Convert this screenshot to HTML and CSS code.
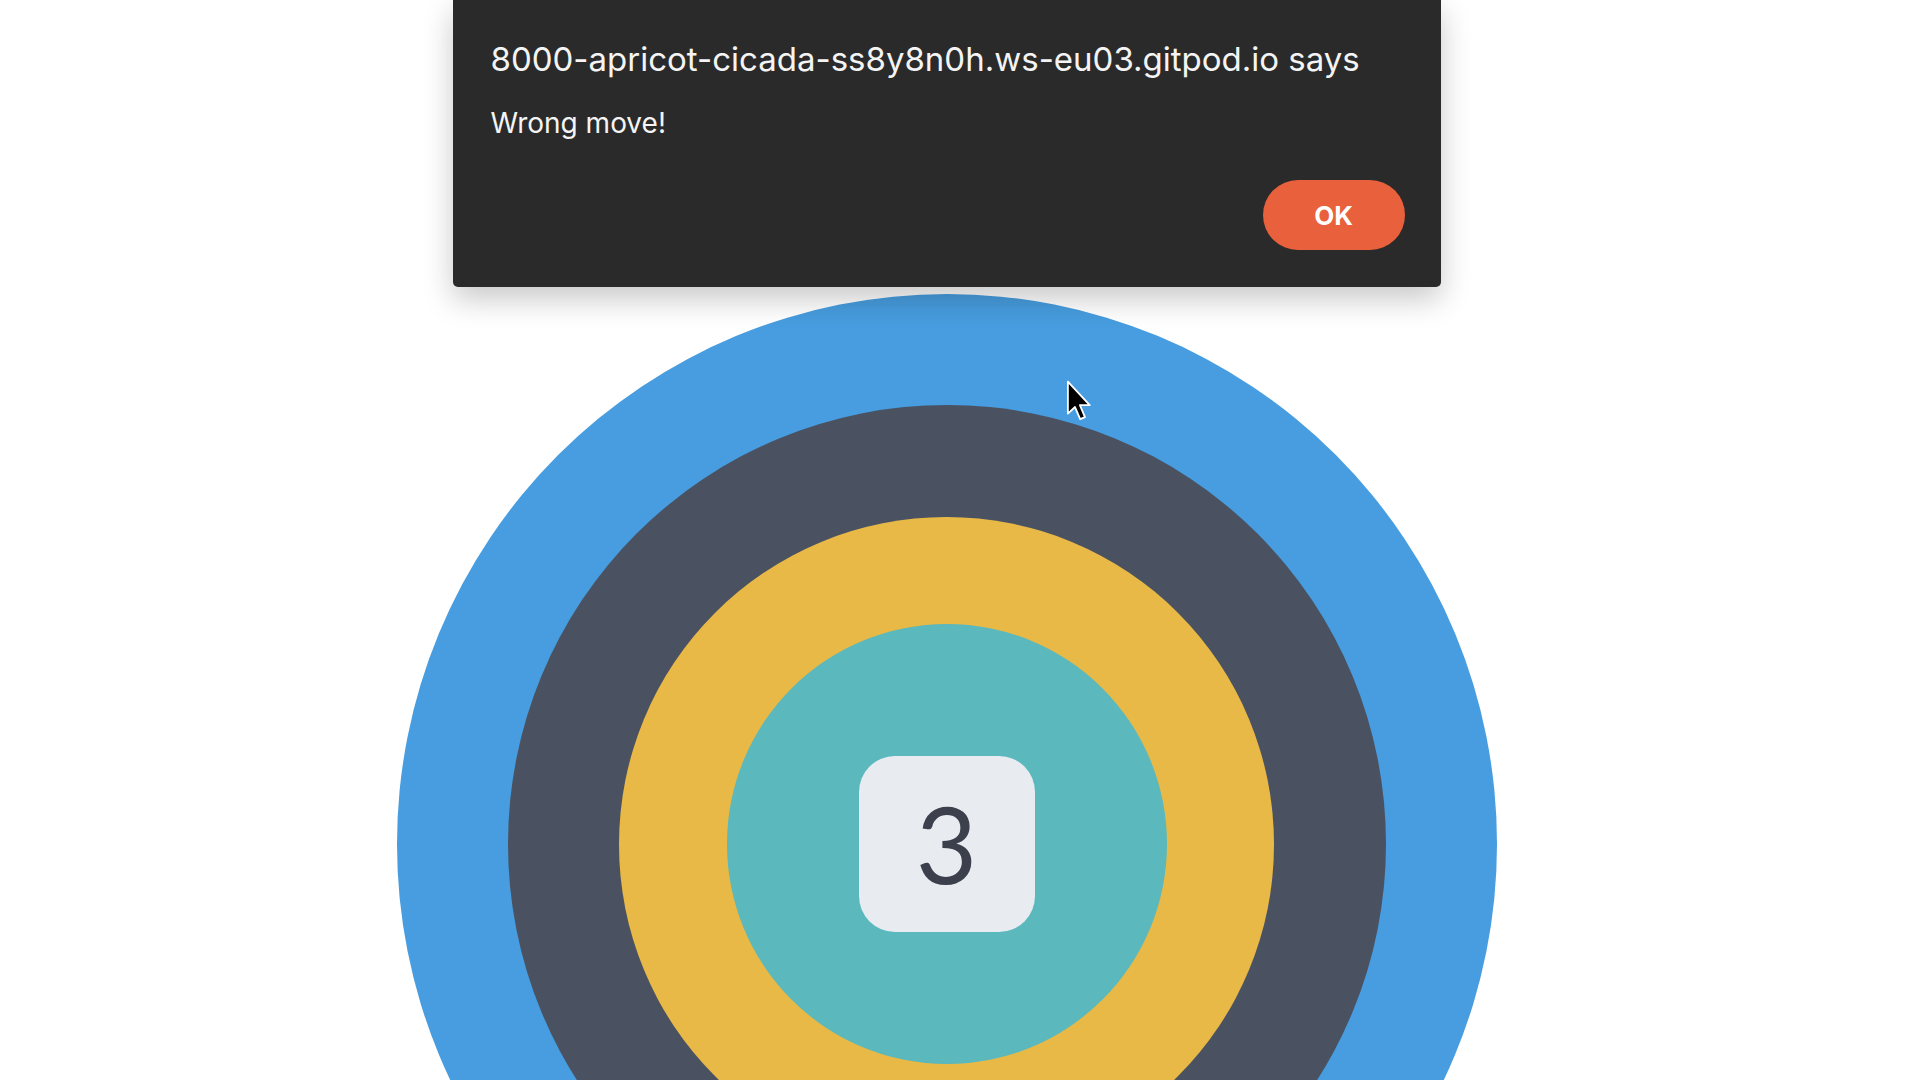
FILE: index.html
```html
<!DOCTYPE html>
<html lang="en">
<head>
<meta charset="utf-8">
<title>Wrong move</title>
<link rel="stylesheet" href="styles.css">
</head>
<body>
<div class="page">
  <div class="dialog">
    <div class="dialog-title">8000-apricot-cicada-ss8y8n0h.ws-eu03.gitpod.io says</div>
    <div class="dialog-msg">Wrong move!</div>
    <div class="dialog-actions"><button class="ok">OK</button></div>
  </div>
  <div class="target">
    <div class="ring ring-blue">
      <div class="ring ring-dark">
        <div class="ring ring-yellow">
          <div class="ring ring-teal">
            <div class="tile">3</div>
          </div>
        </div>
      </div>
    </div>
  </div>
  <svg class="cursor" width="27" height="42" viewBox="0 0 19 30">
    <path d="M1.2 1.2 L1.2 24 L6.3 19.3 L10 28 L13.4 26.5 L9.8 18 L16.8 18 Z" fill="#000" stroke="#fff" stroke-width="1.3" stroke-linejoin="round"/>
  </svg>
</div>
</body>
</html>
```
FILE: styles.css
```css
html, body {
  margin: 0;
  padding: 0;
  background: #fff;
  overflow: hidden;
  height: 1080px;
}
.page {
  width: 1893px;
  display: flex;
  flex-direction: column;
  align-items: center;
  position: relative;
}
.dialog {
  width: 988px;
  height: 287px;
  box-sizing: border-box;
  background: #2a2a2b;
  border-radius: 0 0 5px 5px;
  padding: 39px 36px 37px 38px;
  display: flex;
  flex-direction: column;
  font-family: Inter, "Noto Sans", sans-serif;
  color: #f4f4f4;
  box-shadow: 0 12px 30px rgba(0, 0, 0, 0.22);
  position: relative;
  z-index: 2;
}
.dialog-title {
  font-size: 33px;
  line-height: 40px;
  letter-spacing: 0;
  white-space: nowrap;
}
.dialog-msg {
  font-size: 28px;
  line-height: 34px;
  margin-top: 27px;
}
.dialog-actions {
  margin-top: auto;
  display: flex;
  justify-content: flex-end;
}
.ok {
  width: 142px;
  height: 70px;
  border: none;
  border-radius: 35px;
  background: #e8603c;
  color: #fff;
  font-family: Inter, "Noto Sans", sans-serif;
  font-weight: 700;
  font-size: 26px;
  padding: 0;
}
.target {
  margin-top: 7px;
}
.ring {
  border-radius: 50%;
  display: flex;
  align-items: center;
  justify-content: center;
}
.ring-blue { width: 1100px; height: 1100px; background: #479ddf; }
.ring-dark { width: 878px; height: 878px; background: #4a5262; }
.ring-yellow { width: 655px; height: 655px; background: #e8b946; }
.ring-teal { width: 440px; height: 440px; background: #5bb8bc; }
.tile {
  width: 176px;
  height: 176px;
  border-radius: 36px;
  background: #e8ecf1;
  color: #3b404c;
  font-family: Lato, "Open Sans", sans-serif;
  font-weight: 400;
  font-size: 106px;
  display: flex;
  align-items: center;
  justify-content: center;
  line-height: 1;
  padding-bottom: 2px;
  box-sizing: border-box;
}
.cursor {
  position: absolute;
  left: 1066px;
  top: 380px;
  z-index: 3;
}
```
